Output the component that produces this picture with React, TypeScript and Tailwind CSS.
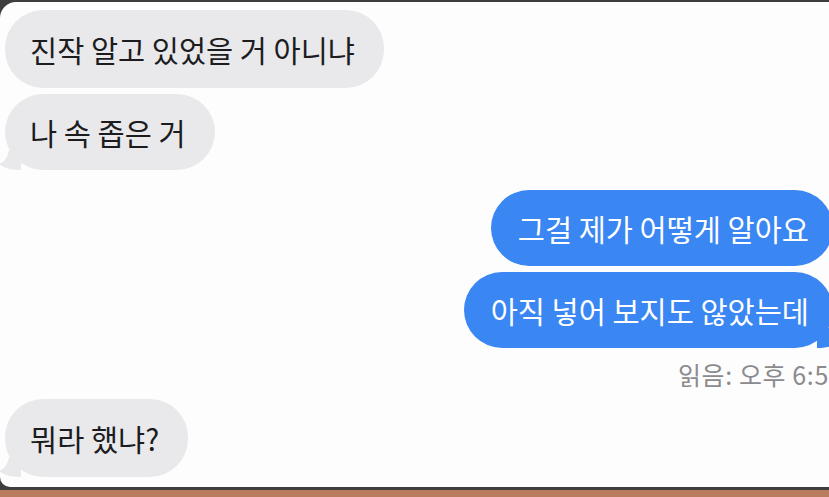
import React from "react";

const font = { fontFamily: '"Noto Sans CJK KR", "Noto Sans", sans-serif' };

function Tail({ side, color }: { side: "left" | "right"; color: string }) {
  if (side === "left") {
    return (
      <svg className="absolute -left-[6px] bottom-0" width="22" height="20" viewBox="0 0 22 20">
        <path d="M22 0 L22 20 C14 20 6 19 0 14 C6 12 9 6 10 0 Z" fill={color} />
      </svg>
    );
  }
  return (
    <svg className="absolute -right-[6px] bottom-0" width="22" height="20" viewBox="0 0 22 20">
      <path d="M0 0 L0 20 C8 20 16 19 22 14 C16 12 13 6 12 0 Z" fill={color} />
    </svg>
  );
}

function Incoming({ text, tail, h }: { text: string; tail?: boolean; h: string }) {
  return (
    <div className={`relative flex ${h} w-fit items-center rounded-[38px] bg-[#e9e9eb] pl-[25px] pr-[29px] text-[29.5px] text-[#1c1c1e]`}>
      {tail ? <Tail side="left" color="#e9e9eb" /> : null}
      <span className="relative">{text}</span>
    </div>
  );
}

function Outgoing({ text, tail, h }: { text: string; tail?: boolean; h: string }) {
  return (
    <div className={`relative flex ${h} w-fit items-center rounded-[38px] bg-[#3a86f2] pl-[27px] pr-[24px] text-[29.5px] text-white`}>
      {tail ? <Tail side="right" color="#3a86f2" /> : null}
      <span className="relative">{text}</span>
    </div>
  );
}

export default function App() {
  return (
    <div className="h-[497px] w-[829px] overflow-hidden bg-[#b97c5c]" style={font}>
      <div className="h-[490px] bg-[#3e3e3e] pt-[2px] pb-[3px]">
        <div className="h-full overflow-hidden rounded-tl-[16px] rounded-bl-[10px] bg-[#fdfdfd] pl-[5px] pt-[8px]">
          <div className="flex flex-col gap-[6px]">
            <Incoming text="진작 알고 있었을 거 아니냐" h="h-[78px]" />
            <Incoming text="나 속 좁은 거" h="h-[76px]" tail />
          </div>
          <div className="-mr-[4px] mt-[20px] flex flex-col items-end gap-[6px]">
            <Outgoing text="그걸 제가 어떻게 알아요" h="h-[76px]" />
            <Outgoing text="아직 넣어 보지도 않았는데" h="h-[76px]" tail />
          </div>
          <div className="ml-[673px] mt-[11px] whitespace-nowrap text-[25px] leading-[30px] tracking-[0.6px] text-[#8b8b8d]">
            읽음: 오후 6:56
          </div>
          <div className="mt-[10px]">
            <Incoming text="뭐라 했냐?" h="h-[78px]" tail />
          </div>
        </div>
      </div>
    </div>
  );
}
